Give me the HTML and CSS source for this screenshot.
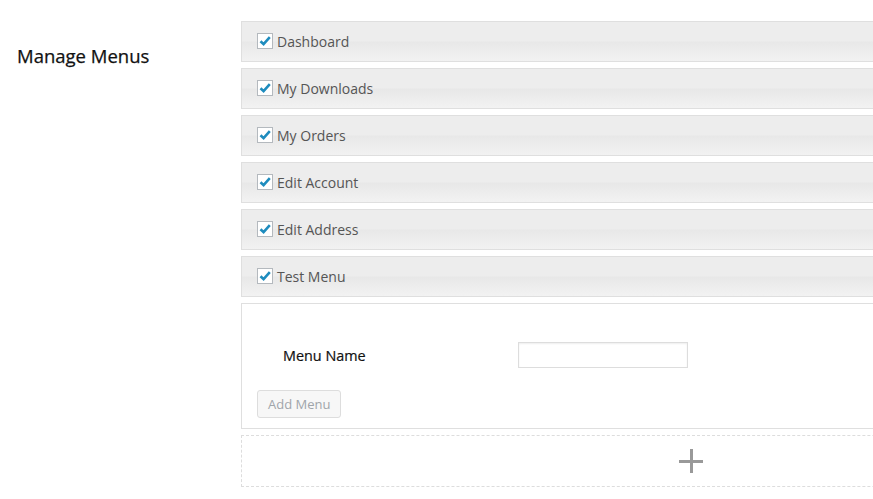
FILE: index.html
```html
<!DOCTYPE html>
<html>
<head>
<meta charset="utf-8">
<link rel="stylesheet" href="styles.css">
</head>
<body>
<div class="page">
  <div class="label-col">
    <h2 class="title">Manage Menus</h2>
  </div>
  <div class="content">
    <div class="menu-list">
      <div class="menu-item"><span class="cb"><svg viewBox="0 0 14 14" width="14" height="14"><path d="M2.5 7.2 L5.6 10.2 L11.8 3.2" fill="none" stroke="#1e8cbe" stroke-width="2.6"/></svg></span><span class="item-label">Dashboard</span></div>
      <div class="menu-item"><span class="cb"><svg viewBox="0 0 14 14" width="14" height="14"><path d="M2.5 7.2 L5.6 10.2 L11.8 3.2" fill="none" stroke="#1e8cbe" stroke-width="2.6"/></svg></span><span class="item-label">My Downloads</span></div>
      <div class="menu-item"><span class="cb"><svg viewBox="0 0 14 14" width="14" height="14"><path d="M2.5 7.2 L5.6 10.2 L11.8 3.2" fill="none" stroke="#1e8cbe" stroke-width="2.6"/></svg></span><span class="item-label">My Orders</span></div>
      <div class="menu-item"><span class="cb"><svg viewBox="0 0 14 14" width="14" height="14"><path d="M2.5 7.2 L5.6 10.2 L11.8 3.2" fill="none" stroke="#1e8cbe" stroke-width="2.6"/></svg></span><span class="item-label">Edit Account</span></div>
      <div class="menu-item"><span class="cb"><svg viewBox="0 0 14 14" width="14" height="14"><path d="M2.5 7.2 L5.6 10.2 L11.8 3.2" fill="none" stroke="#1e8cbe" stroke-width="2.6"/></svg></span><span class="item-label">Edit Address</span></div>
      <div class="menu-item"><span class="cb"><svg viewBox="0 0 14 14" width="14" height="14"><path d="M2.5 7.2 L5.6 10.2 L11.8 3.2" fill="none" stroke="#1e8cbe" stroke-width="2.6"/></svg></span><span class="item-label">Test Menu</span></div>
    </div>
    <div class="add-box">
      <div class="field-row">
        <label class="field-label">Menu Name</label>
        <input class="field-input" type="text">
      </div>
      <button class="add-btn" disabled>Add Menu</button>
    </div>
    <div class="drop-box">
      <span class="plus"></span>
    </div>
  </div>
</div>
</body>
</html>
```

FILE: styles.css
```css
html, body {
  margin: 0;
  padding: 0;
  overflow: hidden;
  background: #fff;
}
body {
  font-family: "Open Sans", "Liberation Sans", sans-serif;
  color: #444;
}
.page {
  display: flex;
  padding-top: 21px;
}
.label-col {
  width: 224px;
  padding-left: 17px;
  flex: none;
}
.title {
  margin: 0;
  font-size: 18.5px;
  font-weight: 400;
  color: #111;
  line-height: 20px;
  padding-top: 25px;
  -webkit-text-stroke: 0.25px #111;
}
.content {
  width: 900px;
  flex: none;
}
.menu-list {
  display: flex;
  flex-direction: column;
  gap: 6px;
}
.menu-item {
  height: 39px;
  border: 1px solid #dfdfdf;
  background: linear-gradient(to bottom, #ededed 0%, #ededed 48%, #e8e8e8 52%, #f2f2f2 100%);
  display: flex;
  align-items: center;
  padding-left: 15px;
  box-sizing: content-box;
}
.cb {
  width: 14px;
  height: 14px;
  border: 1px solid #b4b9be;
  background: #fff;
  display: inline-flex;
  margin-right: 4px;
  margin-top: -2px;
}
.item-label {
  font-size: 14px;
  color: #555;
}
.add-box {
  margin-top: 6px;
  border: 1px solid #dfdfdf;
  background: #fff;
  height: 126px;
  box-sizing: border-box;
  padding: 38px 0 0 15px;
}
.field-row {
  display: flex;
  align-items: center;
  height: 26px;
}
.field-label {
  width: 235px;
  padding-left: 26px;
  font-size: 14.4px;
  font-weight: 400;
  color: #111;
  -webkit-text-stroke: 0.2px #111;
}
.field-input {
  width: 170px;
  height: 26px;
  box-sizing: border-box;
  border: 1px solid #ddd;
  box-shadow: inset 0 1px 2px rgba(0,0,0,0.07);
  margin: 0;
  padding: 0 6px;
  background: #fff;
}
.add-btn {
  display: block;
  margin-top: 22px;
  height: 28px;
  padding: 0 10px;
  font-family: "Open Sans", "Liberation Sans", sans-serif;
  font-size: 13px;
  color: #a0a5aa;
  background: #f7f7f7;
  border: 1px solid #ddd;
  border-radius: 3px;
}
.drop-box {
  margin-top: 6px;
  height: 52px;
  box-sizing: border-box;
  border: 1px dashed #ddd;
  display: flex;
  align-items: center;
  justify-content: center;
}
.plus {
  position: relative;
  width: 24px;
  height: 24px;
  display: block;
}
.plus::before, .plus::after {
  content: "";
  position: absolute;
  background: #999;
}
.plus::before {
  left: 0;
  top: 11px;
  width: 24px;
  height: 3px;
}
.plus::after {
  left: 11px;
  top: 0;
  width: 3px;
  height: 24px;
}
```
